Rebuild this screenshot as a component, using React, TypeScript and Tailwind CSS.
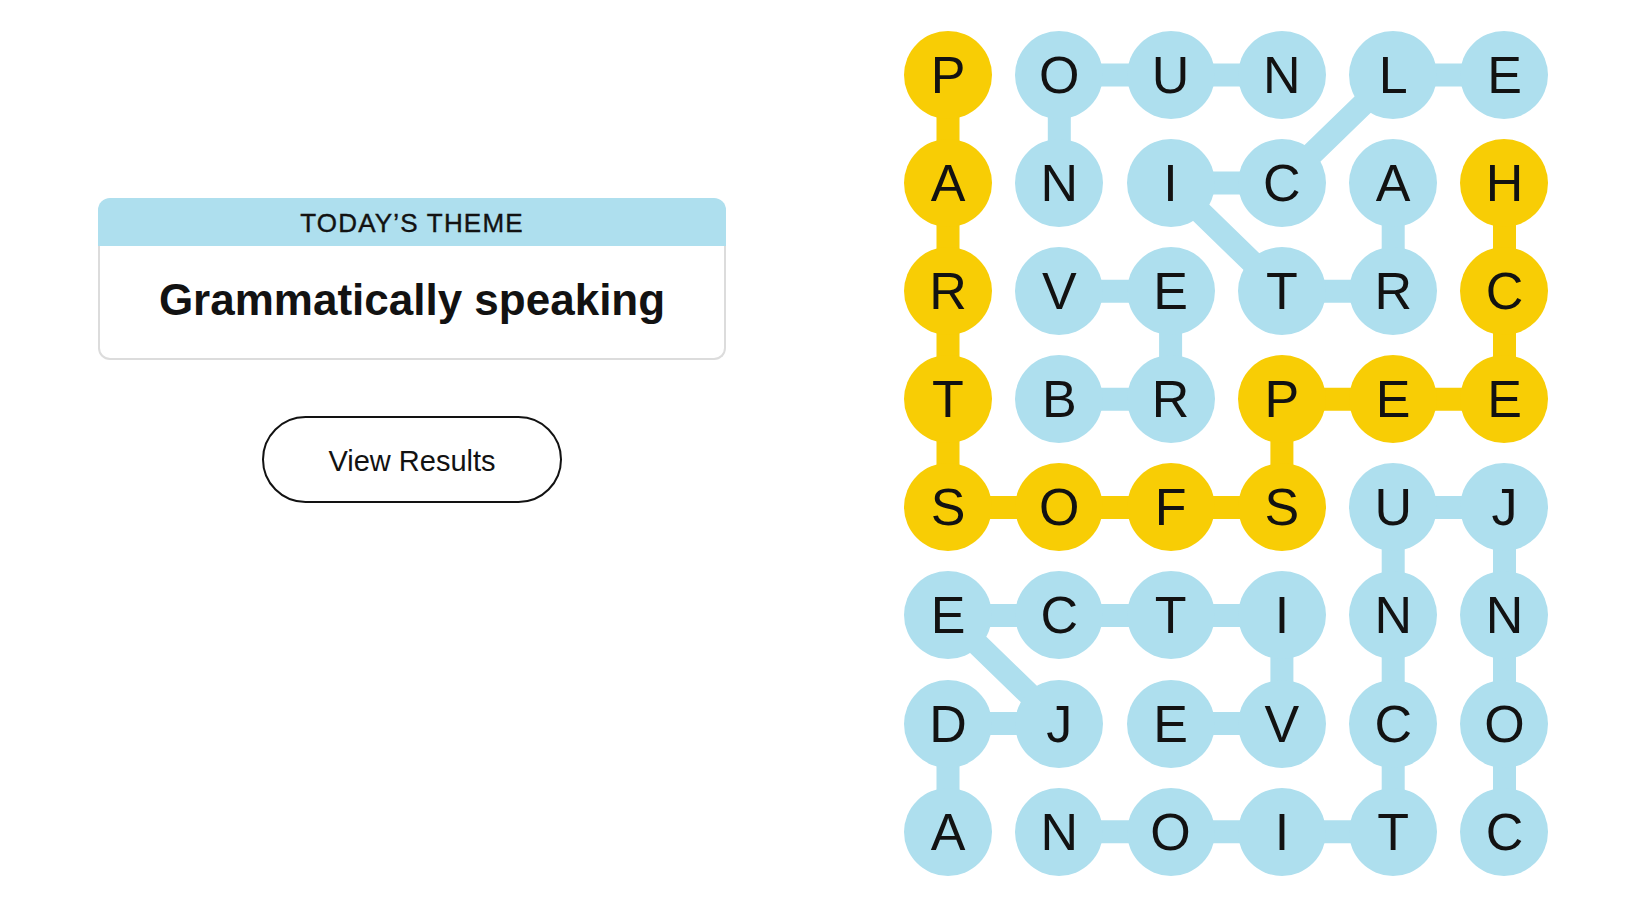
import React from 'react';

// Grille du puzzle (8 lignes x 6 colonnes)
const grid = [
    'POUNLE',
    'ANICAH',
    'RVETRC',
    'TBRPEE',
    'SOFSUJ',
    'ECTINN',
    'DJEVCO',
    'ANOITC',
];

// Cases du spangram (ligne, colonne)
const spangram: [number, number][] = [
    [0, 0], [1, 0], [2, 0], [3, 0], [4, 0], [4, 1], [4, 2], [4, 3],
    [3, 3], [3, 4], [3, 5], [2, 5], [1, 5],
];

// Mots trouvés (chemins)
const words: [number, number][][] = [
    // NOUN
    [[1, 1], [0, 1], [0, 2], [0, 3]],
    // ARTICLE
    [[1, 4], [2, 4], [2, 3], [1, 2], [1, 3], [0, 4], [0, 5]],
    // VERB
    [[2, 1], [2, 2], [3, 2], [3, 1]],
    // CONJUNCTION
    [[7, 5], [6, 5], [5, 5], [4, 5], [4, 4], [5, 4], [6, 4], [7, 4], [7, 3], [7, 2], [7, 1]],
    // ADJECTIVE
    [[7, 0], [6, 0], [6, 1], [5, 0], [5, 1], [5, 2], [5, 3], [6, 3], [6, 2]],
];

const COL = 111.3;
const ROW = 108.1;
const R = 44;

const isSpan = (r: number, c: number) => spangram.some(([a, b]) => a === r && b === c);

function Path({ cells, color }: { cells: [number, number][]; color: string }) {
    const points = cells.map(([r, c]) => `${R + c * COL},${R + r * ROW}`).join(' ');
    return <polyline points={points} fill="none" stroke={color} strokeWidth={23} strokeLinejoin="round" />;
}

export default function App() {
    return (
        <div className="flex min-h-screen bg-white text-[#121212]" style={{ fontFamily: '"Liberation Sans", Arial, sans-serif' }}>
            {/* -------------------- Thème + bouton -------------------- */}
            <div className="w-[628px] ml-[98px] mt-[198px] flex flex-col items-center">
                <div className="w-full">
                    <div className="h-[48px] bg-[#aedfee] rounded-t-[12px] flex items-center justify-center">
                        <span className="text-[26px] tracking-[1.2px] uppercase leading-none mt-[2px] [-webkit-text-stroke:0.4px_#121212]">Today’s Theme</span>
                    </div>
                    <div className="h-[114px] bg-white border-2 border-t-0 border-[#dcdcdc] rounded-b-[12px] flex items-center justify-center">
                        <h1 className="text-[44px] font-bold leading-none -mt-[4px]">Grammatically speaking</h1>
                    </div>
                </div>
                <button
                    type="button"
                    className="mt-[56px] w-[300px] h-[87px] rounded-full border-2 border-[#121212] bg-white text-[29px] leading-none flex items-center justify-center pt-[4px]"
                >
                    View Results
                </button>
            </div>

            {/* -------------------- Grille -------------------- */}
            <div className="relative ml-[178px] mt-[31px] self-start">
                <svg className="absolute inset-0 w-full h-full" aria-hidden="true">
                    {words.map((w, i) => (
                        <Path key={i} cells={w} color="#aedfee" />
                    ))}
                    <Path cells={spangram} color="#f8cd05" />
                </svg>
                <div className="relative grid grid-cols-[repeat(6,88px)] gap-x-[23.3px] gap-y-[20.1px]">
                    {grid.map((row, r) =>
                        row.split('').map((letter, c) => (
                            <div
                                key={`${r}-${c}`}
                                className={`w-[88px] h-[88px] rounded-full flex items-center justify-center text-[52px] leading-none ${
                                    isSpan(r, c) ? 'bg-[#f8cd05]' : 'bg-[#aedfee]'
                                }`}
                            >
                                {letter}
                            </div>
                        ))
                    )}
                </div>
            </div>
        </div>
    );
}
